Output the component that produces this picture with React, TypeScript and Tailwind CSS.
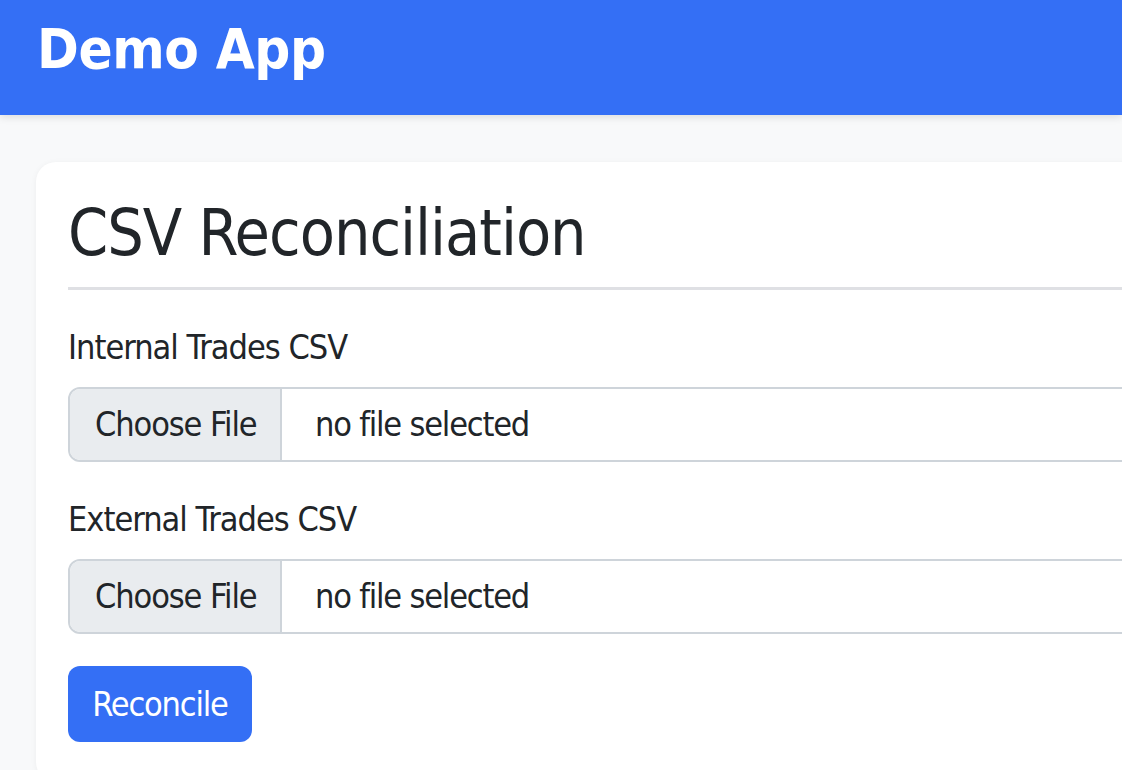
import React from 'react'

const font = { fontFamily: '"DejaVu Sans Condensed", "DejaVu Sans", Tahoma, sans-serif' }

const FileField = ({ id, label }: { id: string; label: string }) => (
  <div className="mt-[37px]">
    <label htmlFor={id} className="block text-[34px] leading-[40px] tracking-[-1px] text-[#212529]">
      {label}
    </label>
    <div className="mt-[20px] flex h-[75px] w-[1100px] items-stretch overflow-hidden rounded-[12px] border-2 border-[#ced4da] bg-white">
      <span className="flex w-[212px] shrink-0 items-center border-r-2 border-[#ced4da] bg-[#e9ecef] pl-[25px] text-[34px] tracking-[-1.1px] text-[#212529]">
        Choose File
      </span>
      <span className="flex items-center pl-[33px] text-[34px] tracking-[-1.2px] text-[#212529]">no file selected</span>
      <input id={id} type="file" className="hidden" />
    </div>
  </div>
)

export default function App() {
  return (
    <div className="h-[770px] w-[1122px] overflow-hidden bg-[#f8f9fa]" style={font}>
      <header className="relative z-10 flex h-[115px] items-center bg-[#346ff5] pl-[37px] shadow-[0_2px_8px_rgba(0,0,0,0.12)]">
        <h1 className="pb-[18px] text-[56px] font-bold leading-none tracking-[-0.4px] text-white">Demo App</h1>
      </header>

      <main className="pl-[36px] pt-[47px]">
        <section className="w-[1200px] rounded-[20px] bg-white pb-[40px] pl-[32px] pt-[33px] shadow-[0_1px_6px_rgba(0,0,0,0.05)]">
          <h2 className="text-[64px] leading-[76px] tracking-[-1px] text-[#212529]">CSV Reconciliation</h2>
          <div className="mt-[16px] h-[3px] bg-[#dfe0e4]" />

          <FileField id="internal" label="Internal Trades CSV" />
          <FileField id="external" label="External Trades CSV" />

          <button
            type="button"
            className="mt-[32px] h-[76px] w-[184px] rounded-[12px] bg-[#346ff5] text-[34px] tracking-[-1.2px] text-white"
          >
            Reconcile
          </button>
        </section>
      </main>
    </div>
  )
}
